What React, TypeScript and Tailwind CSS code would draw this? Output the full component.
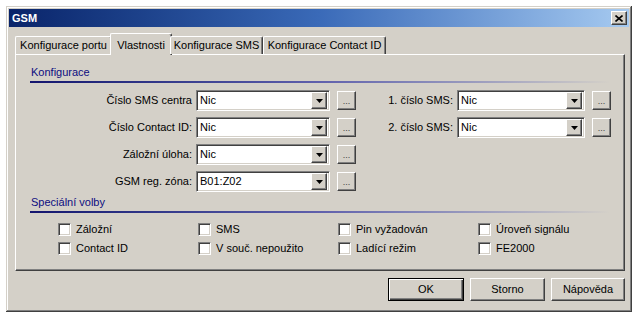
import React from 'react';

const raised =
  'bg-[#d4d0c8] border border-t-white border-l-white border-r-[#404040] border-b-[#404040] shadow-[inset_-1px_-1px_#808080]';
const sunken =
  'border border-t-[#808080] border-l-[#808080] border-r-white border-b-white shadow-[inset_1px_1px_#404040,inset_-1px_-1px_#d4d0c8]';

const Combo: React.FC<{ value: string; width: string }> = ({ value, width }) => (
  <div className={`${sunken} ${width} h-[21px] bg-white flex items-center p-[2px]`}>
    <span className="flex-1 pl-[1px] text-black leading-none">{value}</span>
    <div className={`${raised} w-[16px] h-[17px] flex items-center justify-center`}>
      <svg width="7" height="4" viewBox="0 0 7 4">
        <path d="M0 0h7L3.5 4z" fill="#000" />
      </svg>
    </div>
  </div>
);

const DotsButton = () => (
  <div className={`${raised} w-[19px] h-[19px] flex items-end justify-center pb-[3px] text-[9px] leading-none text-[#404040]`}>
    ...
  </div>
);

const Row: React.FC<{ label: string; value: string; labelW: string; comboW: string }> = ({
  label,
  value,
  labelW,
  comboW,
}) => (
  <div className="flex items-center h-[21px]">
    <span className={`${labelW} text-right pr-[4px] whitespace-nowrap`}>{label}</span>
    <Combo value={value} width={comboW} />
    <div className="ml-[7px]">
      <DotsButton />
    </div>
  </div>
);

const Section: React.FC<{ title: string }> = ({ title }) => (
  <div className="pl-[14px] pr-[14px]">
    <div className="pl-[1px] text-[#0c0c80] leading-[13px]">{title}</div>
    <div className="mt-[2px] h-[2px] bg-gradient-to-r from-[#14146e] via-[#6060ac] to-[#d4d0c8]" />
  </div>
);

const Check: React.FC<{ label: string }> = ({ label }) => (
  <div className="w-[140px] flex items-center h-[13px]">
    <div className={`${sunken} w-[13px] h-[13px] bg-white`} />
    <span className="ml-[5px] whitespace-nowrap">{label}</span>
  </div>
);

const tabs = [
  { label: 'Konfigurace portu', w: 'w-[97px]' },
  { label: 'Vlastnosti', w: 'w-[62px]', active: true },
  { label: 'Konfigurace SMS', w: 'w-[93px]' },
  { label: 'Konfigurace Contact ID', w: 'w-[123px]' },
];

export default function App() {
  return (
    <div className="w-[640px] h-[319px] bg-white pt-[6px] pl-[6px] overflow-hidden font-['Liberation_Sans',Arial,sans-serif] text-[11px] text-black">
      <div className="w-[626px] h-[306px] bg-[#d4d0c8] p-[3px] flex flex-col shadow-[inset_-1px_-1px_#404040,inset_1px_1px_#d4d0c8,inset_-2px_-2px_#808080,inset_2px_2px_#ffffff]">
        {/* title bar */}
        <div className="h-[18px] flex items-center justify-between pl-[3px] pr-[2px] bg-gradient-to-r from-[#0a246a] via-[#3a6ab8] to-[#a6caf0]">
          <span className="text-white font-bold text-[11px]">GSM</span>
          <div className={`${raised} w-[16px] h-[14px] flex items-center justify-center`}>
            <svg width="8" height="7" viewBox="0 0 8 7">
              <path d="M0.5 0.5L7.5 6.5M7.5 0.5L0.5 6.5" stroke="#000" strokeWidth="1.6" />
            </svg>
          </div>
        </div>

        <div className="pl-[6px] pt-[6px]">
          {/* tabs */}
          <div className="flex items-end h-[21px] relative z-10">
            {tabs.map((t) =>
              t.active ? (
                <div
                  key={t.label}
                  className={`${t.w} h-[22px] -mb-[1px] -mx-[2px] bg-[#d4d0c8] border border-b-0 border-t-white border-l-white border-r-[#404040] rounded-t-[2px] shadow-[inset_-1px_0_#808080] flex items-start justify-center pt-[3px] whitespace-nowrap`}
                >
                  {t.label}
                </div>
              ) : (
                <div
                  key={t.label}
                  className={`${t.w} h-[18px] bg-[#d4d0c8] border border-b-0 border-t-white border-l-white border-r-[#404040] rounded-t-[2px] shadow-[inset_-1px_0_#808080] flex items-center justify-center whitespace-nowrap`}
                >
                  {t.label}
                </div>
              )
            )}
          </div>

          {/* panel */}
          <div className="w-[610px] h-[217px] border border-t-white border-l-white border-r-[#404040] border-b-[#404040] shadow-[inset_-1px_-1px_#808080] pt-[11px]">
            <Section title="Konfigurace" />
            <div className="mt-[7px] flex pl-[14px]">
              <div className="flex flex-col gap-[6px]">
                <Row label="Číslo SMS centra" value="Nic" labelW="w-[166px]" comboW="w-[134px]" />
                <Row label="Číslo Contact ID:" value="Nic" labelW="w-[166px]" comboW="w-[134px]" />
                <Row label="Záložní úloha:" value="Nic" labelW="w-[166px]" comboW="w-[134px]" />
                <Row label="GSM reg. zóna:" value="B01:Z02" labelW="w-[166px]" comboW="w-[134px]" />
              </div>
              <div className="flex flex-col gap-[6px]">
                <Row label="1. číslo SMS:" value="Nic" labelW="w-[101px]" comboW="w-[128px]" />
                <Row label="2. číslo SMS:" value="Nic" labelW="w-[101px]" comboW="w-[128px]" />
              </div>
            </div>

            <div className="mt-[4px]">
              <Section title="Speciální volby" />
            </div>
            <div className="mt-[10px] pl-[42px] flex flex-col gap-[6px]">
              <div className="flex">
                <Check label="Záložní" />
                <Check label="SMS" />
                <Check label="Pin vyžadován" />
                <Check label="Úroveň signálu" />
              </div>
              <div className="flex">
                <Check label=" Contact ID" />
                <Check label="V souč. nepoužito" />
                <Check label="Ladící režim" />
                <Check label="FE2000" />
              </div>
            </div>
          </div>

          {/* buttons */}
          <div className="w-[610px] mt-[7px] flex justify-end gap-[6px]">
            <div className="w-[76px] h-[23px] border border-black bg-[#d4d0c8] shadow-[inset_1px_1px_#ffffff,inset_-1px_-1px_#404040,inset_-2px_-2px_#808080] flex items-center justify-center">
              OK
            </div>
            <div className={`${raised} w-[75px] h-[23px] flex items-center justify-center`}>Storno</div>
            <div className={`${raised} w-[74px] h-[23px] flex items-center justify-center`}>Nápověda</div>
          </div>
        </div>
      </div>
    </div>
  );
}
